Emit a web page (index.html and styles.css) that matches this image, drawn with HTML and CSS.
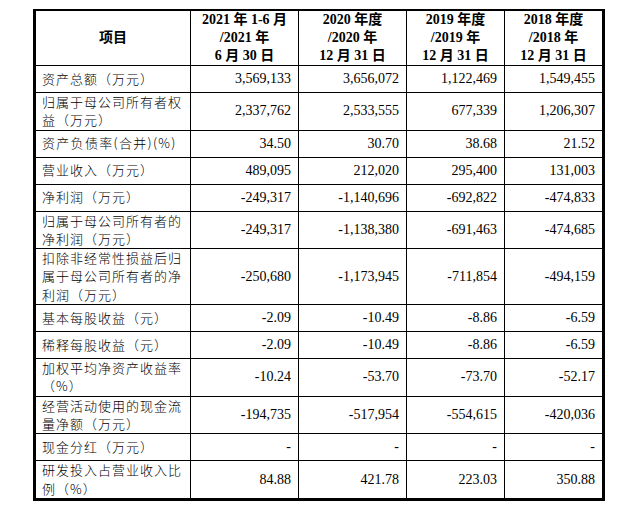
FILE: index.html
```html
<!DOCTYPE html>
<html lang="zh-CN">
<head>
<meta charset="utf-8">
<title>主要财务指标</title>
<link rel="stylesheet" href="styles.css">
</head>
<body>
<div class="page">
<table class="fin">
  <colgroup>
    <col class="c1"><col class="c2"><col class="c3"><col class="c4"><col class="c5">
  </colgroup>
  <thead>
    <tr class="head">
      <th>项目</th>
      <th>2021 年 1-6 月<br>/2021 年<br>6 月 30 日</th>
      <th>2020 年度<br>/2020 年<br>12 月 31 日</th>
      <th>2019 年度<br>/2019 年<br>12 月 31 日</th>
      <th class="last">2018 年度<br>/2018 年<br>12 月 31 日</th>
    </tr>
  </thead>
  <tbody>
    <tr><td class="lbl">资产总额（万元）</td><td>3,569,133</td><td>3,656,072</td><td>1,122,469</td><td class="last">1,549,455</td></tr>
    <tr><td class="lbl">归属于母公司所有者权益（万元）</td><td>2,337,762</td><td>2,533,555</td><td>677,339</td><td class="last">1,206,307</td></tr>
    <tr><td class="lbl nowrap">资产负债率(合并)(%)</td><td>34.50</td><td>30.70</td><td>38.68</td><td class="last">21.52</td></tr>
    <tr><td class="lbl">营业收入（万元）</td><td>489,095</td><td>212,020</td><td>295,400</td><td class="last">131,003</td></tr>
    <tr><td class="lbl">净利润（万元）</td><td>-249,317</td><td>-1,140,696</td><td>-692,822</td><td class="last">-474,833</td></tr>
    <tr><td class="lbl">归属于母公司所有者的净利润（万元）</td><td>-249,317</td><td>-1,138,380</td><td>-691,463</td><td class="last">-474,685</td></tr>
    <tr><td class="lbl">扣除非经常性损益后归属于母公司所有者的净利润（万元）</td><td>-250,680</td><td>-1,173,945</td><td>-711,854</td><td class="last">-494,159</td></tr>
    <tr><td class="lbl">基本每股收益（元）</td><td>-2.09</td><td>-10.49</td><td>-8.86</td><td class="last">-6.59</td></tr>
    <tr><td class="lbl">稀释每股收益（元）</td><td>-2.09</td><td>-10.49</td><td>-8.86</td><td class="last">-6.59</td></tr>
    <tr><td class="lbl">加权平均净资产收益率（%）</td><td>-10.24</td><td>-53.70</td><td>-73.70</td><td class="last">-52.17</td></tr>
    <tr><td class="lbl">经营活动使用的现金流量净额（万元）</td><td>-194,735</td><td>-517,954</td><td>-554,615</td><td class="last">-420,036</td></tr>
    <tr><td class="lbl">现金分红（万元）</td><td>-</td><td>-</td><td>-</td><td class="last">-</td></tr>
    <tr class="end"><td class="lbl">研发投入占营业收入比例（%）</td><td>84.88</td><td>421.78</td><td>223.03</td><td class="last">350.88</td></tr>
  </tbody>
</table>
</div>
</body>
</html>
```
FILE: styles.css
```css
html, body {
  margin: 0;
  padding: 0;
  background: #ffffff;
}

.page {
  padding: 9px 0 0 33px;
}

.fin {
  border-collapse: separate;
  border-spacing: 0;
  table-layout: fixed;
  width: 572px;
  border-top: 2px solid #000;
  border-left: 3px solid #000;
  border-right: 3px solid #000;
  border-bottom: 3px solid #000;
  font-family: "Liberation Serif", "Noto Sans CJK SC", serif;
  font-size: 14px;
  color: #000;
}

.c1 { width: 155px; }
.c2 { width: 108px; }
.c3 { width: 108px; }
.c4 { width: 98px; }
.c5 { width: 97px; }

.fin th,
.fin td {
  border-right: 1px solid #000;
  border-bottom: 1px solid #000;
  padding: 0;
  vertical-align: middle;
  line-height: 17.8px;
}

.fin .last {
  border-right: none;
}

.fin .end td {
  border-bottom: none;
}

.fin th {
  font-weight: bold;
  text-align: center;
  height: 54px;
}

.fin td {
  height: 26px;
  text-align: right;
  padding-right: 7px;
}

.fin td.lbl {
  text-align: left;
  padding: 0 5px 0 6px;
  font-family: "Noto Sans CJK SC", sans-serif;
  font-size: 13px;
  font-weight: 300;
  letter-spacing: 1px;
  line-height: 18.3px;
}

.fin td.nowrap {
  white-space: nowrap;
  letter-spacing: 1.3px;
}
```
